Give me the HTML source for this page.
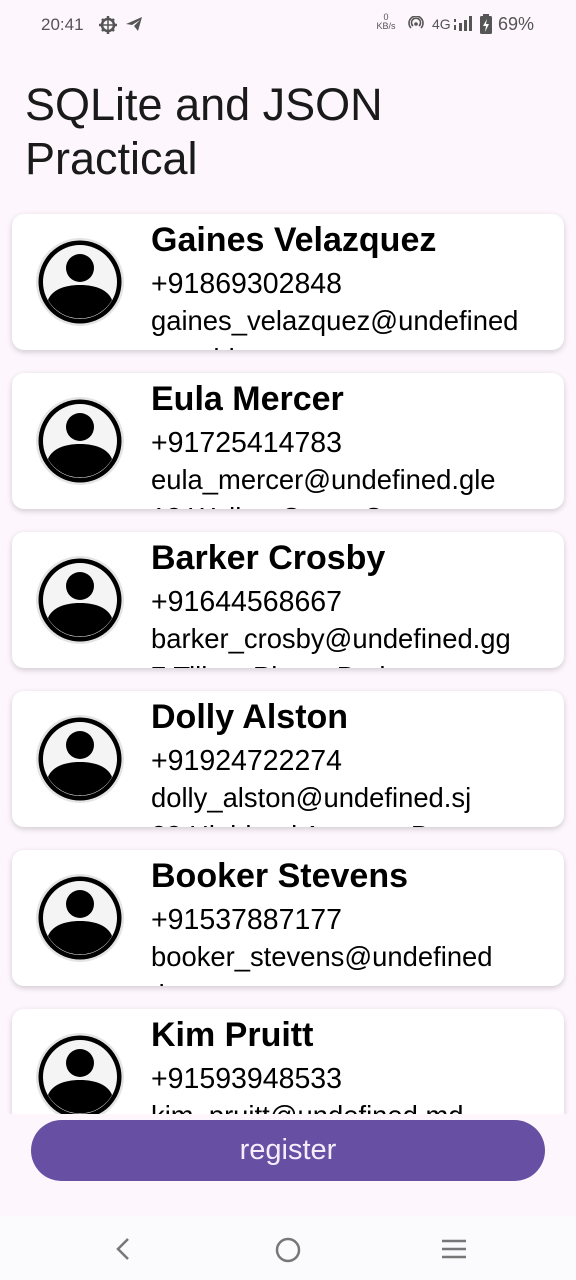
<!DOCTYPE html>
<html><head><meta charset="utf-8"><style>
*{margin:0;padding:0;box-sizing:border-box}
body{width:576px;height:1280px;overflow:hidden;background:#fdf6fd;font-family:"Liberation Sans",Roboto,sans-serif;position:relative;color:#000}
.sb{position:absolute;top:0;left:0;width:576px;height:50px;font-size:16px;color:#555}
h1{position:absolute;left:25px;top:78px;font-size:45px;font-weight:400;line-height:54px;color:#1a1a1a}
.card{position:absolute;left:12px;width:552px;height:136px;background:#fff;border-radius:12px;box-shadow:0 2px 6px rgba(0,0,0,.18);overflow:hidden}
.av{position:absolute;left:24px;top:24px;width:88px;height:88px}
.t{position:absolute;left:139px;top:6px;white-space:nowrap}
.n{font-size:34px;font-weight:700;line-height:40px}
.p{font-size:28.5px;line-height:36px;margin-top:6px}
.e{font-size:27.4px;line-height:38px}
.bot{position:absolute;left:0;top:1114px;width:576px;height:102px;background:#fdf6fd}
.btn{position:absolute;left:31px;top:1120px;width:514px;height:61px;border-radius:31px;background:#674fa3;color:#f4eefc;font-size:29px;text-align:center;line-height:60px;font-weight:500}
.nav{position:absolute;left:0;top:1216px;width:576px;height:64px;background:#fbfafc}
</style></head><body>
<div class="sb">
<span style="position:absolute;left:41px;top:15px;font-size:17px">20:41</span>
<svg style="position:absolute;left:98px;top:15px" width="20" height="20" viewBox="0 0 20 20"><circle cx="10" cy="10" r="6" fill="none" stroke="#555" stroke-width="2.5"/><path d="M10 1v4M10 15v4M1 10h4M15 10h4M4 4l2.5 2.5M13.5 13.5L16 16M4 16l2.5-2.5M13.5 6.5L16 4" stroke="#555" stroke-width="2.5"/><path d="M4 10h12M10 4v12" stroke="#555" stroke-width="1.5"/></svg>
<svg style="position:absolute;left:125px;top:16px" width="18" height="16" viewBox="0 0 18 16"><path d="M1 8L17 1 13 15 9 10 15 4 7 9z" fill="#555"/></svg>
<span style="position:absolute;left:374px;top:13px;font-size:9px;line-height:9px;text-align:center;width:24px">0<br>KB/s</span>
<svg style="position:absolute;left:408px;top:16px" width="16" height="14" viewBox="0 0 16 14"><path d="M3 12A7 7 0 1 1 13 12M5 10A4.5 4.5 0 1 1 11 10" fill="none" stroke="#555" stroke-width="1.6"/><circle cx="8" cy="8" r="1.8" fill="#555"/></svg>
<span style="position:absolute;left:432px;top:16px;font-size:14px">4G</span>
<svg style="position:absolute;left:453px;top:15px" width="20" height="18" viewBox="0 0 20 18"><rect x="1" y="4" width="2" height="3" fill="#555"/><rect x="1" y="10" width="2" height="5" fill="#555"/><rect x="6" y="8" width="3" height="8" fill="#555"/><rect x="11" y="5" width="3" height="11" fill="#555"/><rect x="16" y="1" width="3" height="15" fill="#555"/></svg>
<svg style="position:absolute;left:479px;top:13px" width="14" height="22" viewBox="0 0 14 22"><rect x="1" y="3" width="12" height="18" rx="1.5" fill="#555"/><rect x="4" y="1" width="6" height="3" fill="#555"/><path d="M8 6L4 13h3l-1 6 4-8H7z" fill="#fff"/></svg>
<span style="position:absolute;left:498px;top:14px;font-size:18px">69%</span>
</div>
<h1>SQLite and JSON<br>Practical</h1>

<svg width="0" height="0" style="position:absolute"><defs><symbol id="u" viewBox="0 0 88 88"><circle cx="44" cy="44" r="44" fill="#e4e4e4"/><circle cx="44" cy="44" r="41.5" fill="#000"/><circle cx="44" cy="44" r="37" fill="#f4f4f4"/><circle cx="44" cy="30" r="14" fill="#000"/><path d="M12 62C16 52 28 47 44 47S72 52 76 62A37 37 0 0 1 12 62z" fill="#000"/></symbol></defs></svg>

<div class="card" style="top:214px"><svg class="av"><use href="#u"/></svg><div class="t"><div class="n">Gaines Velazquez</div><div class="p">+91869302848</div><div class="e">gaines_velazquez@undefined<br>.marthlane</div></div></div>
<div class="card" style="top:373px"><svg class="av"><use href="#u"/></svg><div class="t"><div class="n">Eula Mercer</div><div class="p">+91725414783</div><div class="e">eula_mercer@undefined.gle<br>13 Walker Court, C</div></div></div>
<div class="card" style="top:532px"><svg class="av"><use href="#u"/></svg><div class="t"><div class="n">Barker Crosby</div><div class="p">+91644568667</div><div class="e">barker_crosby@undefined.gg<br>7 Tillary Place, Bed</div></div></div>
<div class="card" style="top:691px"><svg class="av"><use href="#u"/></svg><div class="t"><div class="n">Dolly Alston</div><div class="p">+91924722274</div><div class="e">dolly_alston@undefined.sj<br>23 Highland Avenue, B</div></div></div>
<div class="card" style="top:850px"><svg class="av"><use href="#u"/></svg><div class="t"><div class="n">Booker Stevens</div><div class="p">+91537887177</div><div class="e">booker_stevens@undefined<br>.bovarn</div></div></div>
<div class="card" style="top:1009px"><svg class="av"><use href="#u"/></svg><div class="t"><div class="n">Kim Pruitt</div><div class="p">+91593948533</div><div class="e">kim_pruitt@undefined.md</div></div></div>

<div class="bot"></div>
<div class="btn">register</div>
<div class="nav">
<svg style="position:absolute;left:112px;top:20px" width="20" height="26" viewBox="0 0 20 26"><path d="M16 3L6 13l10 10" fill="none" stroke="#777" stroke-width="2.5"/></svg>
<svg style="position:absolute;left:274px;top:20px" width="28" height="28" viewBox="0 0 28 28"><circle cx="14" cy="14" r="11" fill="none" stroke="#777" stroke-width="2.5"/></svg>
<svg style="position:absolute;left:440px;top:22px" width="28" height="24" viewBox="0 0 28 24"><path d="M2 3h24M2 11h24M2 19h24" stroke="#777" stroke-width="2.5"/></svg>
</div>
</body></html>
